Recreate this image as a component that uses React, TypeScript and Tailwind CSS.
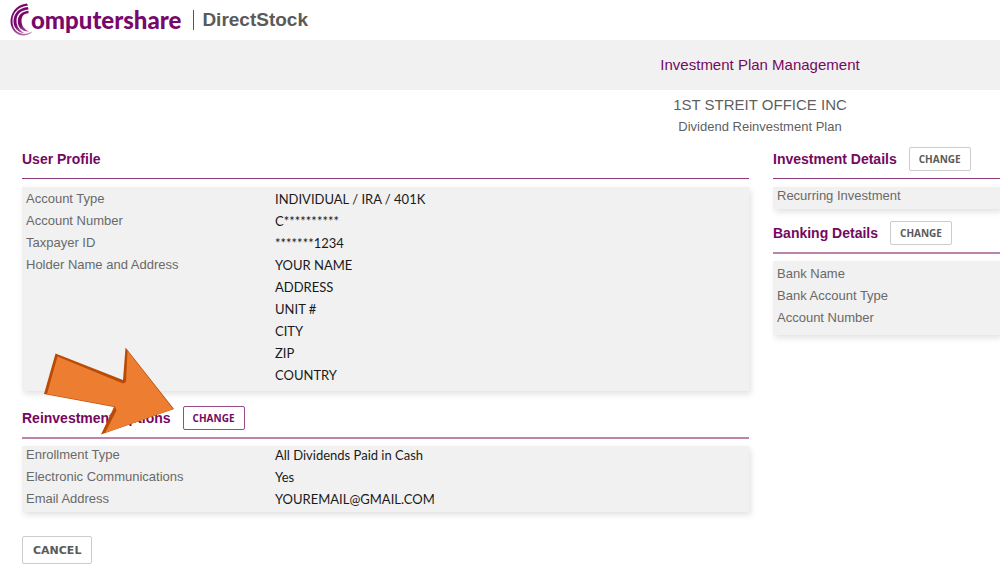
import type { ReactNode } from "react";

const profile = [
    { label: "Account Type", value: ["INDIVIDUAL / IRA / 401K"] },
    { label: "Account Number", value: ["C**********"] },
    { label: "Taxpayer ID", value: ["*******1234"] },
    { label: "Holder Name and Address", value: ["YOUR NAME", "ADDRESS", "UNIT #", "CITY", "ZIP", "COUNTRY"] },
];

const reinvestment = [
    { label: "Enrollment Type", value: ["All Dividends Paid in Cash"] },
    { label: "Electronic Communications", value: ["Yes"] },
    { label: "Email Address", value: ["YOUREMAIL@GMAIL.COM"] },
];

const banking = [{ label: "Bank Name" }, { label: "Bank Account Type" }, { label: "Account Number" }];

const Logo = () => {
    return (
        <div className="flex items-center text-[#78086c]">
            <svg width="24" height="34" viewBox="10 4 24 34" fill="url(#swoosh)" aria-hidden="true">
                <defs>
                    {/* arcs fade out towards the bottom */}
                    <linearGradient id="swoosh" gradientUnits="userSpaceOnUse" x1="20" y1="4" x2="24" y2="37">
                        <stop offset="0.65" stopColor="#78086c" />
                        <stop offset="1" stopColor="#b878b0" />
                    </linearGradient>
                </defs>
                <path d="M27 4.500C16 5.500 10.500 14 10.500 23C11 31 17 37 24 36.500C28 36 31 34.500 32 32.500C28 35 24 35.500 20 34C15 32 12.500 28 12.500 22C12.500 14 18 7.500 28 6.500Z" />
                <path d="M28 8C18 9 13.500 15 13.500 22.500C13.500 29 18 33.500 24 34C20 31.500 16.500 28 16.500 22C16.500 16 20 11 28.500 10.500Z" />
                <path d="M28.500 11.800C21 12.500 17.800 17 17.800 22.500C17.800 28.500 22 32.800 29 32.500C24.500 30.500 21.500 27 21.500 22C21.500 17.500 23.500 14.500 28.500 14.300Z" />
            </svg>
            <span className="-ml-[3px] font-[Lato,sans-serif] text-2xl leading-10 font-black">omputershare</span>
        </div>
    );
};

const Arrow = () => {
    return (
        <svg className="pointer-events-none absolute -top-[59px] left-5" width="134" height="90" viewBox="42 347 134 90" aria-hidden="true">
            <polygon points="55.500,353.500 123,380 125.500,347.500 174,409 101,434.500 114,407 44,394" fill="#b94b06" />
            <polygon points="57.500,356.500 123,383.500 126,382 127.500,351 173,409 105,433 116.500,410.500 115,406.500 47,394" fill="#ed7d31" />
        </svg>
    );
};

const ChangeButton = ({ active }: { active?: boolean }) => {
    return (
        <button
            type="button"
            className={`h-6 rounded-xs border bg-white px-[9px] font-['Open_Sans',sans-serif] text-[10px] leading-none font-bold ${active ? "border-[#9b4a87] text-[#74095f]" : "border-[#cccccc] text-[#5a5a5a]"}`}
        >
            CHANGE
        </button>
    );
};

const SectionHead = ({ title, rule, children }: { title: string; rule: string; children?: ReactNode }) => {
    return (
        <div className={`relative flex items-center gap-3 pb-[7px] ${rule}`}>
            <h2 className="text-sm leading-6 font-bold text-[#74095f]">{title}</h2>
            {children}
        </div>
    );
};

const thinRule = "mb-2 border-b border-[#8e3b7b]";
const thickRule = "mb-[7px] border-b-2 border-[#bd84ab]";

const Fields = ({ items, className }: { items: { label: string; value?: string[] }[]; className: string }) => {
    return (
        <dl className={`flex flex-col gap-1 bg-[#f1f1f1] px-1 text-[13px] leading-[18px] shadow-[2px_3px_6px_#e2e2e2] ${className}`}>
            {items.map((item) => (
                <div key={item.label} className="flex">
                    <dt className="w-[249px] shrink-0 text-[#696969]">{item.label}</dt>
                    <dd className="flex flex-col gap-1 font-[Lato,sans-serif] text-[#1a1a1a]">
                        {item.value?.map((line) => (
                            <div key={line}>{line}</div>
                        ))}
                    </dd>
                </div>
            ))}
        </dl>
    );
};

export default function App() {
    return (
        <div className="min-h-screen overflow-hidden bg-white font-['Liberation_Sans',sans-serif]">
            <header className="flex h-10 items-center pl-[10px]">
                <Logo />
                <div className="ml-3 h-5 w-px bg-[#555555]" />
                <span className="ml-2 text-[19px] leading-[44px] font-bold text-[#5a5a5a]">DirectStock</span>
            </header>

            <div className="bg-[#f1f1f1]">
                <h1 className="ml-auto w-[48%] text-center text-[15px] leading-[50px] text-[#74095f]">Investment Plan Management</h1>
            </div>

            <div className="ml-auto w-[48%] pt-1 text-center text-[#5f5f5f]">
                <p className="text-[15px] leading-[22px]">1ST STREIT OFFICE INC</p>
                <p className="text-[13px] leading-[22px]">Dividend Reinvestment Plan</p>
            </div>

            <main className="flex gap-6 pt-[9px] pl-[22px]">
                <div className="min-w-0 flex-1">
                    <section>
                        <SectionHead title="User Profile" rule={thinRule} />
                        <Fields items={profile} className="pt-[3px] pb-[7px]" />
                    </section>
                    <section className="mt-[15px]">
                        <SectionHead title="Reinvestment Options" rule={thickRule}>
                            <ChangeButton active />
                            <Arrow />
                        </SectionHead>
                        <Fields items={reinvestment} className="pb-1" />
                    </section>
                    <button
                        type="button"
                        className="mt-6 h-7 rounded-xs border border-[#cccccc] bg-white px-[10px] font-['DejaVu_Sans',sans-serif] text-[11px] leading-none font-bold text-[#5a5a5a]"
                    >
                        CANCEL
                    </button>
                </div>

                <div className="w-[227px] shrink-0">
                    <section>
                        <SectionHead title="Investment Details" rule={thinRule}>
                            <ChangeButton />
                        </SectionHead>
                        <Fields items={[{ label: "Recurring Investment" }]} className="pb-1" />
                    </section>
                    <section className="mt-3">
                        <SectionHead title="Banking Details" rule={thickRule}>
                            <ChangeButton />
                        </SectionHead>
                        <Fields items={banking} className="pt-1 pb-2" />
                    </section>
                </div>
            </main>
        </div>
    );
}
